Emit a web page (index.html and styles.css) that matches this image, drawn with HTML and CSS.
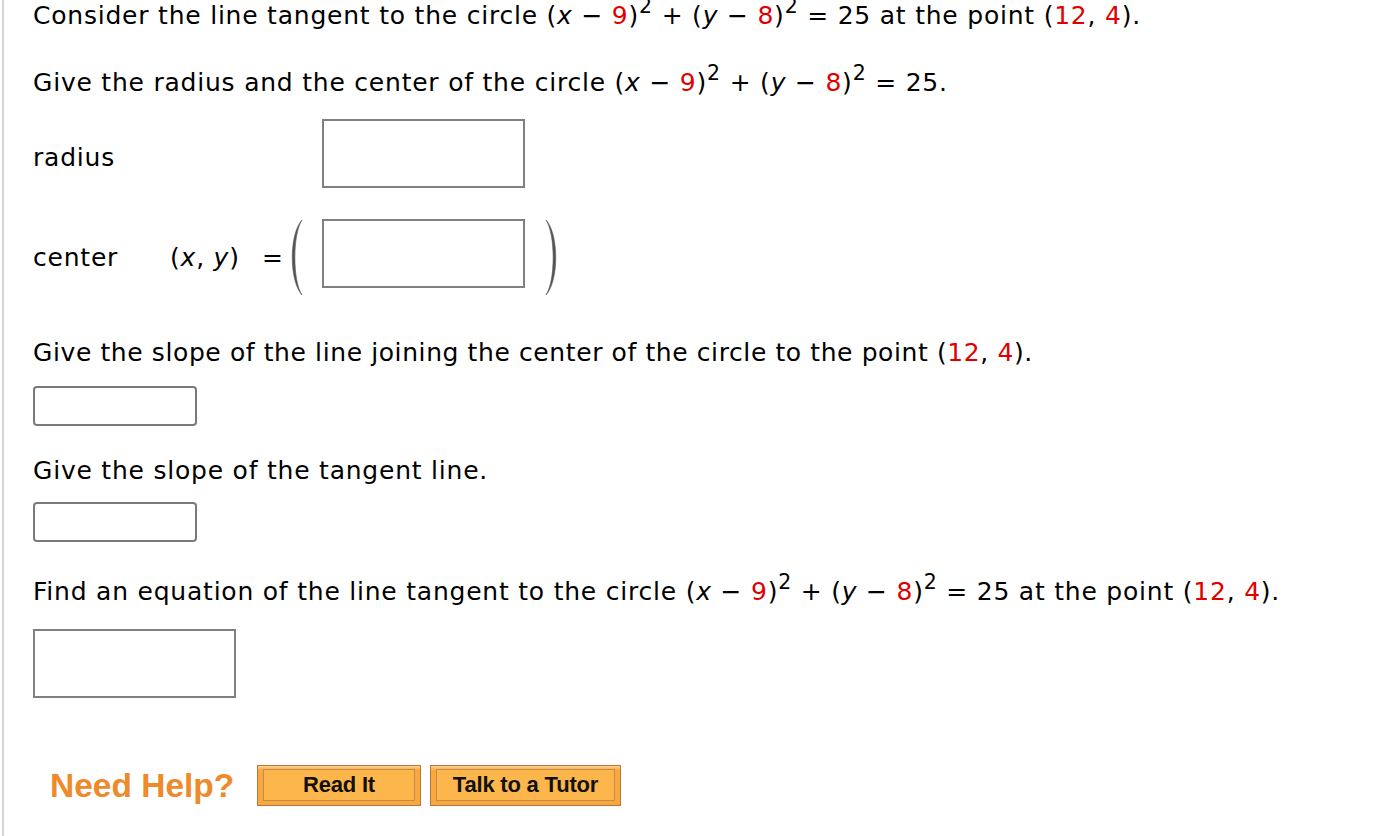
FILE: index.html
```html
<!DOCTYPE html>
<html>
<head>
<meta charset="utf-8">
<link rel="stylesheet" href="styles.css">
</head>
<body>
<div class="page">
  <p class="txt l1">Consider the line tangent to the circle (<i>x</i> − <span class="red">9</span>)<sup>2</sup> + (<i>y</i> − <span class="red">8</span>)<sup>2</sup> = 25 at the point (<span class="red">12</span>, <span class="red">4</span>).</p>
  <p class="txt l2">Give the radius and the center of the circle (<i>x</i> − <span class="red">9</span>)<sup>2</sup> + (<i>y</i> − <span class="red">8</span>)<sup>2</sup> = 25.</p>

  <div class="row radius-row">
    <span class="txt label-wide">radius</span>
    <div class="box big"></div>
  </div>

  <div class="row center-row">
    <span class="txt label-center">center</span>
    <span class="txt xy">(<i>x</i>, <i>y</i>)</span>
    <span class="txt eq">=</span>
    <svg class="paren" viewBox="0 0 18 77" width="18" height="77">
      <path d="M15 1 C2 15 2 62 15 76 C5.5 62 5.5 15 15 1 Z" fill="#555" stroke="#555" stroke-width="0.6"/>
    </svg>
    <div class="box big"></div>
    <svg class="paren rparen" viewBox="0 0 18 77" width="18" height="77">
      <path d="M3 1 C16 15 16 62 3 76 C12.5 62 12.5 15 3 1 Z" fill="#555" stroke="#555" stroke-width="0.6"/>
    </svg>
  </div>

  <p class="txt l3">Give the slope of the line joining the center of the circle to the point (<span class="red">12</span>, <span class="red">4</span>).</p>
  <div class="box small in1"></div>

  <p class="txt l4">Give the slope of the tangent line.</p>
  <div class="box small in2"></div>

  <p class="txt l5">Find an equation of the line tangent to the circle (<i>x</i> − <span class="red">9</span>)<sup>2</sup> + (<i>y</i> − <span class="red">8</span>)<sup>2</sup> = 25 at the point (<span class="red">12</span>, <span class="red">4</span>).</p>
  <div class="box big in3"></div>

  <div class="help">
    <span class="need">Need Help?</span>
    <span class="btn read"><span class="btn-inner">Read It</span></span>
    <span class="btn tutor"><span class="btn-inner">Talk to a Tutor</span></span>
  </div>
</div>
</body>
</html>
```

FILE: styles.css
```css
html, body {
  margin: 0;
  padding: 0;
  background: #fff;
}

p { margin: 0; }

.page {
  margin-left: 2px;
  border-left: 2px solid #d4d4d4;
  padding: 1px 0 0 29px;
  min-height: 836px;
  box-sizing: border-box;
  font-family: "DejaVu Sans", Verdana, sans-serif;
  color: #000;
}

.txt {
  font-size: 25px;
  line-height: 30px;
  letter-spacing: 0.78px;
}

p.txt {
  white-space: nowrap;
}

.red { color: #e00000; }

i { font-style: italic; }

sup {
  font-size: 0.82em;
  vertical-align: 0.55em;
  line-height: 0;
}

.l2 { margin-top: 37px; }
.l3 { letter-spacing: 0.6px; }

.row {
  display: flex;
}

.radius-row {
  margin-top: 21px;
  align-items: center;
}

.label-wide {
  width: 289px;
  padding-top: 8px;
}

.center-row {
  margin-top: 31px;
  align-items: center;
}

.label-center { width: 137px; }

.xy { width: 92px; }

.eq { width: 25px; }

.paren {
  display: block;
  align-self: flex-start;
}

.center-row .box { align-self: flex-start; margin-left: 17px; }

.rparen { margin-left: 18px; }

.box {
  box-sizing: border-box;
  border: 2px solid #808080;
  background: #fff;
}

.box.big {
  width: 203px;
  height: 69px;
}

.box.small {
  width: 164px;
  height: 40px;
  border-radius: 4px;
  border-color: #7a7a7a;
}

.l3 { margin-top: 42px; }
.in1 { margin-top: 18px; }
.l4 { margin-top: 30px; }
.in2 { margin-top: 16px; }
.l5 { margin-top: 35px; }
.in3 { margin-top: 22px; }

.help {
  margin-top: 67px;
  display: flex;
  align-items: center;
  padding-left: 17px;
}

.need {
  font-family: "Liberation Sans", Arial, sans-serif;
  font-weight: bold;
  font-size: 33.5px;
  color: #ee8a2c;
  width: 207px;
}

.btn {
  box-sizing: border-box;
  height: 41px;
  border: 1px solid #b7773a;
  background: linear-gradient(#fbd59a 0, #f7a83f 4px, #f7a83f 100%);
  padding: 3px 5px 4px 5px;
  display: flex;
}

.btn.read { width: 164px; }
.btn.tutor { width: 191px; margin-left: 9px; }

.btn-inner {
  flex: 1;
  box-sizing: border-box;
  border: 1px solid #c88a48;
  background: #fdb64b;
  display: flex;
  align-items: center;
  justify-content: center;
  font-family: "Liberation Sans", Arial, sans-serif;
  font-weight: bold;
  font-size: 22px;
  color: #111;
  letter-spacing: -0.2px;
}
```
